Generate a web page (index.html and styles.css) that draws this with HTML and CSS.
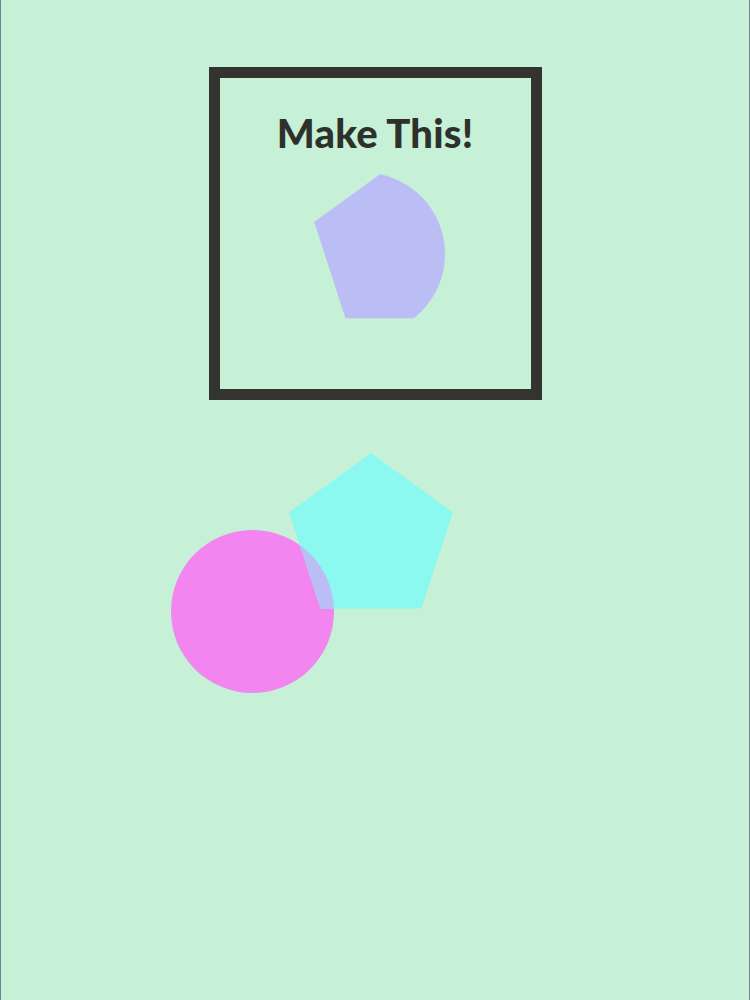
FILE: index.html
```html
<!DOCTYPE html>
<html>
<head>
<meta charset="utf-8">
<link rel="stylesheet" href="styles.css">
</head>
<body>
<div class="page">
  <div class="target">
    <h1 class="title">Make This!</h1>
    <svg class="target-art" viewBox="219 158 311 231" width="311" height="231">
      <defs>
        <clipPath id="tc"><circle cx="362.5" cy="254" r="81.5"/></clipPath>
      </defs>
      <polygon clip-path="url(#tc)" fill="#BBBDF5" points="395,162.6 476.8,222 445.5,318.2 344.5,318.2 313.2,222"/>
    </svg>
  </div>
  <svg class="play" viewBox="0 400 750 600" width="750" height="600">
    <defs>
      <clipPath id="pc"><circle cx="252.5" cy="611.5" r="81.5"/></clipPath>
    </defs>
    <circle cx="252.5" cy="611.5" r="81.5" fill="#F285EF"/>
    <polygon fill="#8BF9F0" points="371,453 452.8,512.4 421.5,608.6 320.5,608.6 289.2,512.4"/>
    <polygon clip-path="url(#pc)" fill="#BBBDF5" points="371,453 452.8,512.4 421.5,608.6 320.5,608.6 289.2,512.4"/>
  </svg>
</div>
</body>
</html>
```
FILE: styles.css
```css
html, body {
  margin: 0;
  padding: 0;
  background: #C6F1D7;
}
.page {
  width: 750px;
  height: 1000px;
  box-sizing: border-box;
  border-left: 1px solid #6f8795;
  border-right: 1px solid #6f8795;
  display: flex;
  flex-direction: column;
  align-items: center;
  overflow: hidden;
  background: #C6F1D7;
}
.target {
  margin-top: 67px;
  width: 333px;
  height: 333px;
  box-sizing: border-box;
  border: 11px solid #33332F;
  display: flex;
  flex-direction: column;
  align-items: center;
}
.title {
  margin: 30px 0 0;
  height: 50px;
  line-height: 50px;
  font-family: Lato, "Liberation Sans", sans-serif;
  font-weight: 900;
  font-size: 40px;
  letter-spacing: 0.2px;
  color: #2E302C;
  white-space: nowrap;
}
.target-art {
  display: block;
}
.play {
  display: block;
  flex: none;
}
```
